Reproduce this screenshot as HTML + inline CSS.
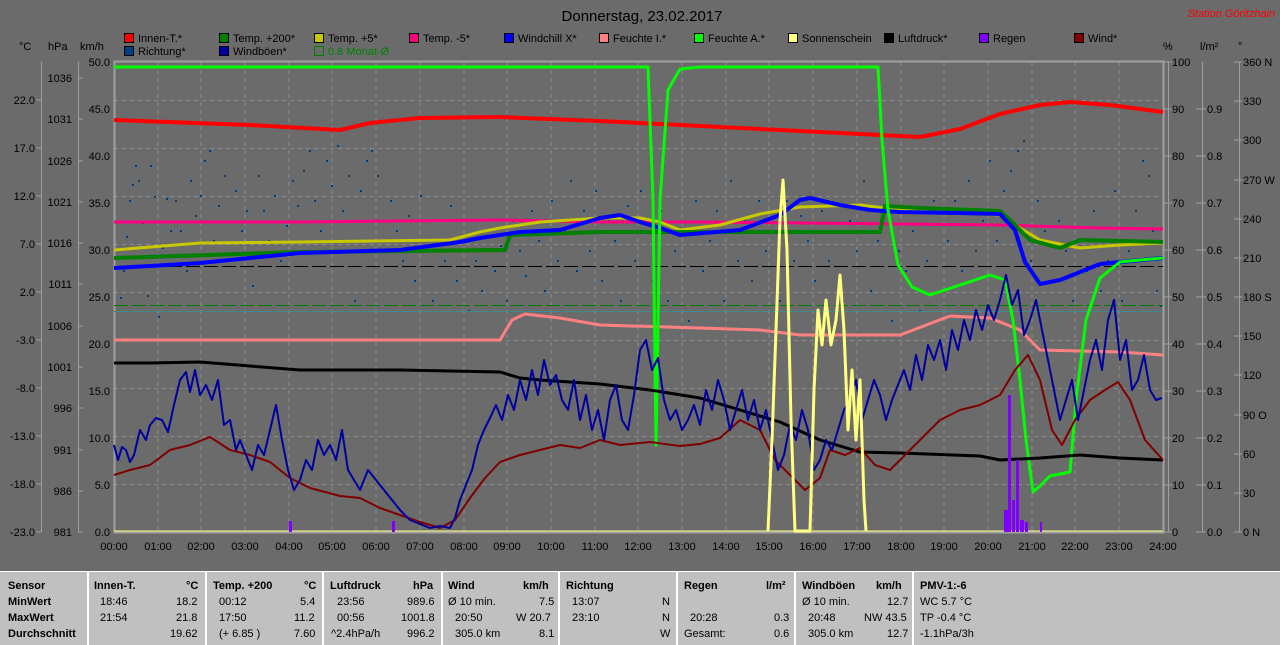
<!DOCTYPE html>
<html><head><meta charset="utf-8"><style>
body{margin:0;width:1280px;height:644px;background:#6b6b6b;overflow:hidden;font-family:"Liberation Sans",sans-serif;}
svg{position:absolute;left:0;top:0}
svg text{font-family:"Liberation Sans",sans-serif;font-size:11px;fill:#000}
#tab{position:absolute;left:0;top:571px;width:1280px;height:73px;background:#c0c0c0;border-top:1px solid #fff;font-size:11px;color:#000}
.c{position:absolute;top:0;height:73px;border-left:2px solid #fff}
.r{position:absolute;white-space:nowrap}
.b{font-weight:bold}
</style></head><body>
<svg width="1280" height="571" viewBox="0 0 1280 571">
<text x="642" y="21" text-anchor="middle" style="font-size:15px">Donnerstag, 23.02.2017</text>
<text x="1275" y="17" text-anchor="end" style="fill:#ff0000;font-size:11px;font-style:italic">Station Göritzhain</text>
<!-- legend -->
<g stroke="#000" stroke-width="1">
<rect x="124.5" y="33.5" width="9" height="9" fill="#ff0000"/>
<rect x="219.5" y="33.5" width="9" height="9" fill="#008000"/>
<rect x="314.5" y="33.5" width="9" height="9" fill="#c8c800"/>
<rect x="409.5" y="33.5" width="9" height="9" fill="#ff0080"/>
<rect x="504.5" y="33.5" width="9" height="9" fill="#0000ff"/>
<rect x="599.5" y="33.5" width="9" height="9" fill="#ff8080"/>
<rect x="694.5" y="33.5" width="9" height="9" fill="#00ff00"/>
<rect x="788.5" y="33.5" width="9" height="9" fill="#ffff80"/>
<rect x="884.5" y="33.5" width="9" height="9" fill="#000000"/>
<rect x="979.5" y="33.5" width="9" height="9" fill="#8000ff"/>
<rect x="1074.5" y="33.5" width="9" height="9" fill="#800000"/>
<rect x="124.5" y="46.5" width="9" height="9" fill="#004080"/>
<rect x="219.5" y="46.5" width="9" height="9" fill="#0000a0"/>
<rect x="314.5" y="46.5" width="9" height="9" fill="none" stroke="#008000"/>
</g>
<g>
<text x="138" y="42">Innen-T.*</text><text x="233" y="42">Temp. +200*</text><text x="328" y="42">Temp. +5*</text>
<text x="423" y="42">Temp. -5*</text><text x="518" y="42">Windchill X*</text><text x="613" y="42">Feuchte I.*</text>
<text x="708" y="42">Feuchte A.*</text><text x="802" y="42">Sonnenschein</text><text x="898" y="42">Luftdruck*</text>
<text x="993" y="42">Regen</text><text x="1088" y="42">Wind*</text>
<text x="138" y="55">Richtung*</text><text x="233" y="55">Windböen*</text><text x="328" y="55" style="fill:#008000">0.8 Monat-Ø</text>
</g>
<text x="19" y="50">°C</text><text x="48" y="50">hPa</text><text x="80" y="50">km/h</text>
<text x="1163" y="50">%</text><text x="1200" y="50">l/m²</text><text x="1238" y="50">°</text>
<!-- axes lines -->
<g stroke="#a0a0a0" stroke-width="1">
<line x1="41.5" y1="62" x2="41.5" y2="532"/><line x1="78.5" y1="62" x2="78.5" y2="532"/>
<line x1="1168.5" y1="62" x2="1168.5" y2="532"/><line x1="1202.5" y1="62" x2="1202.5" y2="532"/><line x1="1239.5" y1="62" x2="1239.5" y2="532"/>
</g>
<g stroke="#a0a0a0">
<path d="M36 100h5M36 148h5M36 196h5M36 244h5M36 292h5M36 340h5M36 388h5M36 436h5M36 484h5M36 532h5"/>
<path d="M78 78h5M78 119h5M78 161h5M78 202h5M78 243h5M78 284h5M78 326h5M78 367h5M78 408h5M78 450h5M78 491h5M78 532h5"/>
<path d="M1164 62h8M1164 109h8M1164 156h8M1164 203h8M1164 250h8M1164 297h8M1164 344h8M1164 391h8M1164 438h8M1164 485h8M1164 532h8"/>
<path d="M1196 109h10M1196 156h10M1196 203h10M1196 250h10M1196 297h10M1196 344h10M1196 391h10M1196 438h10M1196 485h10M1196 532h10"/>
<path d="M1234 62h8M1234 101h8M1234 140h8M1234 180h8M1234 219h8M1234 258h8M1234 297h8M1234 336h8M1234 375h8M1234 415h8M1234 454h8M1234 493h8M1234 532h8"/>
</g>
<g text-anchor="end">
<text x="35" y="104">22.0</text><text x="35" y="152">17.0</text><text x="35" y="200">12.0</text><text x="35" y="248">7.0</text><text x="35" y="296">2.0</text><text x="35" y="344">-3.0</text><text x="35" y="392">-8.0</text><text x="35" y="440">-13.0</text><text x="35" y="488">-18.0</text><text x="35" y="536">-23.0</text>
<text x="72" y="82">1036</text><text x="72" y="123">1031</text><text x="72" y="165">1026</text><text x="72" y="206">1021</text><text x="72" y="247">1016</text><text x="72" y="288">1011</text><text x="72" y="330">1006</text><text x="72" y="371">1001</text><text x="72" y="412">996</text><text x="72" y="454">991</text><text x="72" y="495">986</text><text x="72" y="536">981</text>
<text x="110" y="66">50.0</text><text x="110" y="113">45.0</text><text x="110" y="160">40.0</text><text x="110" y="207">35.0</text><text x="110" y="254">30.0</text><text x="110" y="301">25.0</text><text x="110" y="348">20.0</text><text x="110" y="395">15.0</text><text x="110" y="442">10.0</text><text x="110" y="489">5.0</text><text x="110" y="536">0.0</text>
</g>
<g>
<text x="1172" y="66">100</text><text x="1172" y="113">90</text><text x="1172" y="160">80</text><text x="1172" y="207">70</text><text x="1172" y="254">60</text><text x="1172" y="301">50</text><text x="1172" y="348">40</text><text x="1172" y="395">30</text><text x="1172" y="442">20</text><text x="1172" y="489">10</text><text x="1172" y="536">0</text>
<text x="1207" y="113">0.9</text><text x="1207" y="160">0.8</text><text x="1207" y="207">0.7</text><text x="1207" y="254">0.6</text><text x="1207" y="301">0.5</text><text x="1207" y="348">0.4</text><text x="1207" y="395">0.3</text><text x="1207" y="442">0.2</text><text x="1207" y="489">0.1</text><text x="1207" y="536">0.0</text>
<text x="1243" y="66">360 N</text><text x="1243" y="105">330</text><text x="1243" y="144">300</text><text x="1243" y="184">270 W</text><text x="1243" y="223">240</text><text x="1243" y="262">210</text><text x="1243" y="301">180 S</text><text x="1243" y="340">150</text><text x="1243" y="379">120</text><text x="1243" y="419">90 O</text><text x="1243" y="458">60</text><text x="1243" y="497">30</text><text x="1243" y="536">0 N</text>
</g>
<!-- grid -->
<g stroke="#8c8c8c" stroke-dasharray="4,4" stroke-width="1">
<path d="M114 100.5H1164M114 148.5H1164M114 196.5H1164M114 244.5H1164M114 292.5H1164M114 340.5H1164M114 388.5H1164M114 436.5H1164M114 484.5H1164"/>
<path d="M158 62V532M201 62V532M245 62V532M289 62V532M332 62V532M376 62V532M420 62V532M464 62V532M507 62V532M551 62V532M595 62V532M638 62V532M682 62V532M726 62V532M769 62V532M813 62V532M857 62V532M901 62V532M944 62V532M988 62V532M1032 62V532M1075 62V532M1119 62V532"/>
</g>
<rect x="114.5" y="61.5" width="1049" height="471" fill="none" stroke="#a0a0a0" stroke-width="2"/>
<g text-anchor="middle">
<text x="114" y="550">00:00</text><text x="158" y="550">01:00</text><text x="201" y="550">02:00</text><text x="245" y="550">03:00</text><text x="289" y="550">04:00</text><text x="332" y="550">05:00</text><text x="376" y="550">06:00</text><text x="420" y="550">07:00</text><text x="464" y="550">08:00</text><text x="507" y="550">09:00</text><text x="551" y="550">10:00</text><text x="595" y="550">11:00</text><text x="638" y="550">12:00</text><text x="682" y="550">13:00</text><text x="726" y="550">14:00</text><text x="769" y="550">15:00</text><text x="813" y="550">16:00</text><text x="857" y="550">17:00</text><text x="901" y="550">18:00</text><text x="944" y="550">19:00</text><text x="988" y="550">20:00</text><text x="1032" y="550">21:00</text><text x="1075" y="550">22:00</text><text x="1119" y="550">23:00</text><text x="1163" y="550">24:00</text>
</g>
<!-- scatter Richtung -->
<g fill="#004080">
<path d="M120 297h2v2h-2zM123 270h2v2h-2zM126 236h2v2h-2zM129 200h2v2h-2zM132 184h2v2h-2zM135 165h2v2h-2zM138 180h2v2h-2zM142 222h2v2h-2zM147 295h2v2h-2zM150 165h2v2h-2zM154 196h2v2h-2zM158 316h2v2h-2zM162 247h2v2h-2zM166 198h2v2h-2zM170 230h2v2h-2zM175 200h2v2h-2zM180 230h2v2h-2zM186 270h2v2h-2zM190 180h2v2h-2zM195 215h2v2h-2zM200 195h2v2h-2zM204 160h2v2h-2zM209 150h2v2h-2zM213 240h2v2h-2zM218 205h2v2h-2zM224 175h2v2h-2zM229 260h2v2h-2zM235 190h2v2h-2zM241 230h2v2h-2zM246 210h2v2h-2zM252 285h2v2h-2zM258 175h2v2h-2zM263 210h2v2h-2zM268 240h2v2h-2zM274 195h2v2h-2zM280 260h2v2h-2zM286 225h2v2h-2zM292 180h2v2h-2zM297 205h2v2h-2zM303 170h2v2h-2zM309 150h2v2h-2zM314 200h2v2h-2zM320 230h2v2h-2zM326 160h2v2h-2zM331 185h2v2h-2zM337 145h2v2h-2zM342 210h2v2h-2zM348 175h2v2h-2zM354 300h2v2h-2zM360 190h2v2h-2zM366 160h2v2h-2zM371 150h2v2h-2zM377 175h2v2h-2zM383 240h2v2h-2zM390 200h2v2h-2zM396 230h2v2h-2zM402 260h2v2h-2zM408 215h2v2h-2zM414 280h2v2h-2zM420 195h2v2h-2zM426 240h2v2h-2zM432 300h2v2h-2zM438 220h2v2h-2zM444 260h2v2h-2zM450 205h2v2h-2zM456 280h2v2h-2zM462 240h2v2h-2zM468 310h2v2h-2zM475 260h2v2h-2zM481 290h2v2h-2zM487 230h2v2h-2zM494 270h2v2h-2zM500 245h2v2h-2zM506 300h2v2h-2zM512 220h2v2h-2zM519 250h2v2h-2zM525 275h2v2h-2zM531 210h2v2h-2zM538 240h2v2h-2zM544 290h2v2h-2zM551 200h2v2h-2zM557 260h2v2h-2zM564 230h2v2h-2zM570 180h2v2h-2zM576 270h2v2h-2zM583 210h2v2h-2zM589 250h2v2h-2zM595 190h2v2h-2zM601 280h2v2h-2zM608 220h2v2h-2zM614 240h2v2h-2zM620 300h2v2h-2zM627 205h2v2h-2zM634 260h2v2h-2zM640 190h2v2h-2zM646 230h2v2h-2zM652 280h2v2h-2zM660 210h2v2h-2zM667 300h2v2h-2zM674 250h2v2h-2zM681 230h2v2h-2zM688 320h2v2h-2zM695 200h2v2h-2zM702 270h2v2h-2zM709 240h2v2h-2zM716 210h2v2h-2zM723 300h2v2h-2zM730 180h2v2h-2zM737 260h2v2h-2zM744 220h2v2h-2zM751 280h2v2h-2zM758 200h2v2h-2zM765 250h2v2h-2zM772 230h2v2h-2zM779 300h2v2h-2zM786 200h2v2h-2zM793 260h2v2h-2zM800 215h2v2h-2zM807 240h2v2h-2zM814 280h2v2h-2zM821 210h2v2h-2zM828 260h2v2h-2zM835 230h2v2h-2zM842 300h2v2h-2zM849 220h2v2h-2zM856 250h2v2h-2zM863 180h2v2h-2zM870 290h2v2h-2zM877 240h2v2h-2zM884 210h2v2h-2zM891 320h2v2h-2zM898 250h2v2h-2zM905 270h2v2h-2zM912 230h2v2h-2zM919 310h2v2h-2zM926 260h2v2h-2zM933 200h2v2h-2zM940 290h2v2h-2zM947 240h2v2h-2zM954 200h2v2h-2zM961 270h2v2h-2zM968 180h2v2h-2zM975 250h2v2h-2zM982 220h2v2h-2zM989 160h2v2h-2zM996 240h2v2h-2zM1003 190h2v2h-2zM1010 170h2v2h-2zM1017 150h2v2h-2zM1023 140h2v2h-2zM1030 260h2v2h-2zM1037 200h2v2h-2zM1044 230h2v2h-2zM1051 280h2v2h-2zM1058 220h2v2h-2zM1065 250h2v2h-2zM1072 300h2v2h-2zM1079 240h2v2h-2zM1086 270h2v2h-2zM1093 210h2v2h-2zM1100 290h2v2h-2zM1107 260h2v2h-2zM1114 190h2v2h-2zM1121 300h2v2h-2zM1128 250h2v2h-2zM1135 210h2v2h-2zM1142 160h2v2h-2zM1148 175h2v2h-2zM1152 230h2v2h-2zM1156 290h2v2h-2zM1160 305h2v2h-2z"/>
</g>
<!-- reference lines -->
<line x1="114" y1="266.5" x2="1163" y2="266.5" stroke="#000" stroke-dasharray="14,4"/>
<line x1="114" y1="305.5" x2="1163" y2="305.5" stroke="#008000" stroke-dasharray="14,4"/>
<line x1="114" y1="311.5" x2="1163" y2="311.5" stroke="#3c8c8c"/>
<line x1="114" y1="531" x2="1163" y2="531" stroke="#ffff80"/>
<g fill="none" stroke-linejoin="round">
<polyline stroke="#ff0000" stroke-width="4" points="114,120 250,125 340,130 370,123 420,118 500,117 600,121 700,126 800,131 880,135 920,137 960,129 1000,114 1040,105 1070,102 1110,105 1163,112"/>
<polyline stroke="#ff0080" stroke-width="3" points="114,222 300,222 400,221 500,220 600,222 700,222 800,223 900,224 1000,225 1100,228 1163,229"/>
<polyline stroke="#ff8080" stroke-width="3" points="114,340 500,340 512,320 525,314 560,318 600,325 700,328 760,330 800,335 900,335 950,316 990,318 1020,330 1040,350 1120,352 1163,355"/>
<polyline stroke="#c8c800" stroke-width="3" points="114,250 200,243 300,242 450,240 480,232 500,228 540,222 600,218 640,218 660,222 680,230 720,225 760,214 800,207 860,205 900,210 960,212 1000,215 1020,228 1040,240 1080,248 1120,245 1163,243"/>
<polyline stroke="#008000" stroke-width="4" points="114,258 300,252 505,250 510,235 600,232 880,232 885,206 920,208 1000,211 1010,220 1030,240 1060,248 1080,240 1163,242"/>
<polyline stroke="#0000ff" stroke-width="4" points="114,268 150,266 200,263 250,258 300,253 400,250 460,242 480,238 520,232 560,230 600,218 620,215 640,222 660,228 680,235 740,230 780,215 800,200 810,198 840,205 870,210 900,212 960,213 1000,214 1015,230 1025,262 1040,284 1060,280 1100,264 1163,258"/>
<polyline stroke="#00ff00" stroke-width="3" points="114,67 648,67 653,200 656,445 660,200 668,90 680,69 700,67 878,67 882,140 888,210 898,265 912,287 930,295 960,285 990,275 1005,280 1013,320 1020,380 1026,440 1033,492 1040,486 1050,476 1070,472 1076,400 1086,320 1100,278 1120,262 1140,260 1163,258"/>
<polyline stroke="#000" stroke-width="3" points="114,363 150,363 200,362 250,366 300,370 400,370 500,372 520,378 540,380 600,384 650,390 700,398 740,410 780,422 820,440 860,452 900,453 980,456 1000,460 1040,458 1080,455 1120,458 1163,460"/>
<polyline stroke="#800000" stroke-width="2" points="114,475 130,470 150,465 170,450 190,445 210,437 230,450 250,455 270,462 290,478 310,488 340,496 360,498 380,508 400,515 420,522 440,528 455,520 470,498 485,478 500,462 520,455 540,450 560,445 580,448 600,440 620,445 650,442 680,446 700,444 720,438 740,420 760,430 775,460 790,475 805,490 820,478 830,450 845,455 860,448 875,465 890,470 905,455 920,440 940,420 960,410 980,405 1000,395 1015,370 1028,355 1040,380 1052,430 1062,445 1075,420 1090,400 1105,390 1118,382 1130,400 1145,440 1163,460"/>
<polyline stroke="#0000a0" stroke-width="2" points="114,445 118,460 122,447 126,450 130,462 134,455 140,430 146,440 150,425 156,418 162,420 168,432 174,405 180,380 186,372 190,392 195,370 200,395 206,385 212,400 218,380 224,425 230,420 236,450 240,440 246,455 252,470 258,445 264,455 270,430 276,405 282,440 288,470 294,490 300,480 306,460 312,470 318,440 324,455 330,445 336,460 342,430 348,470 354,480 360,490 368,470 376,480 384,490 392,500 400,510 410,520 420,524 430,528 440,526 450,528 455,518 460,500 466,485 472,470 478,445 484,430 490,418 496,405 502,420 508,395 514,410 520,380 526,400 532,370 538,395 544,360 550,385 556,375 562,400 568,410 574,380 580,420 586,395 592,430 598,410 604,440 610,400 616,385 622,420 628,430 634,395 640,350 646,340 652,370 658,358 664,400 670,420 676,410 682,430 688,420 694,405 700,425 706,390 712,410 718,380 724,400 730,430 736,410 742,390 748,420 754,400 760,430 766,410 772,440 778,470 784,455 790,425 796,440 802,410 808,430 814,470 820,460 826,440 832,450 838,430 844,410 850,400 856,380 862,420 868,400 874,380 880,395 886,420 892,400 898,385 904,370 910,390 916,355 922,380 928,345 934,360 940,340 946,370 952,330 958,350 964,320 970,340 976,310 982,330 988,305 994,320 1000,300 1006,275 1012,305 1018,290 1024,335 1030,320 1036,300 1042,330 1048,360 1054,390 1060,420 1066,400 1072,380 1078,420 1084,390 1090,360 1096,340 1102,370 1108,320 1114,300 1120,360 1126,340 1132,390 1138,380 1144,355 1150,390 1156,400 1162,398"/>
<polyline stroke="#ffff80" stroke-width="3" points="768,531 772,440 776,330 780,220 783,180 787,250 791,420 795,531 810,531 814,390 818,310 822,345 826,300 831,345 836,320 840,275 844,330 848,430 852,370 856,440 860,380 864,500 866,531"/>
</g>
<g fill="#8000ff">
<rect x="289" y="521" width="3" height="11"/><rect x="392" y="521" width="3" height="11"/>
<rect x="1004" y="510" width="4" height="22"/><rect x="1008" y="395" width="3" height="137"/><rect x="1012" y="500" width="3" height="32"/>
<rect x="1016" y="460" width="3" height="72"/><rect x="1020" y="520" width="4" height="12"/><rect x="1025" y="522" width="3" height="10"/><rect x="1040" y="522" width="2" height="10"/>
</g>
</svg>
<div id="tab">
<div class="c" style="left:87px"></div><div class="c" style="left:205px"></div><div class="c" style="left:322px"></div><div class="c" style="left:441px"></div><div class="c" style="left:558px"></div><div class="c" style="left:676px"></div><div class="c" style="left:794px"></div><div class="c" style="left:912px"></div>
<div class="r b" style="left:8px;top:8px">Sensor</div><div class="r b" style="left:8px;top:24px">MinWert</div><div class="r b" style="left:8px;top:40px">MaxWert</div><div class="r b" style="left:8px;top:56px">Durchschnitt</div>
<div class="r b" style="left:94px;top:8px">Innen-T.</div><div class="r b" style="left:186px;top:8px">°C</div>
<div class="r" style="left:100px;top:24px">18:46</div><div class="r" style="left:176px;top:24px">18.2</div>
<div class="r" style="left:100px;top:40px">21:54</div><div class="r" style="left:176px;top:40px">21.8</div>
<div class="r" style="left:170px;top:56px">19.62</div>
<div class="r b" style="left:213px;top:8px">Temp. +200</div><div class="r b" style="left:304px;top:8px">°C</div>
<div class="r" style="left:219px;top:24px">00:12</div><div class="r" style="left:300px;top:24px">5.4</div>
<div class="r" style="left:219px;top:40px">17:50</div><div class="r" style="left:294px;top:40px">11.2</div>
<div class="r" style="left:219px;top:56px">(+ 6.85 )</div><div class="r" style="left:294px;top:56px">7.60</div>
<div class="r b" style="left:330px;top:8px">Luftdruck</div><div class="r b" style="left:413px;top:8px">hPa</div>
<div class="r" style="left:337px;top:24px">23:56</div><div class="r" style="left:407px;top:24px">989.6</div>
<div class="r" style="left:337px;top:40px">00:56</div><div class="r" style="left:401px;top:40px">1001.8</div>
<div class="r" style="left:331px;top:56px">^2.4hPa/h</div><div class="r" style="left:407px;top:56px">996.2</div>
<div class="r b" style="left:448px;top:8px">Wind</div><div class="r b" style="left:523px;top:8px">km/h</div>
<div class="r" style="left:448px;top:24px">Ø 10 min.</div><div class="r" style="left:539px;top:24px">7.5</div>
<div class="r" style="left:455px;top:40px">20:50</div><div class="r" style="left:516px;top:40px">W 20.7</div>
<div class="r" style="left:455px;top:56px">305.0 km</div><div class="r" style="left:539px;top:56px">8.1</div>
<div class="r b" style="left:566px;top:8px">Richtung</div>
<div class="r" style="left:572px;top:24px">13:07</div><div class="r" style="left:662px;top:24px">N</div>
<div class="r" style="left:572px;top:40px">23:10</div><div class="r" style="left:662px;top:40px">N</div>
<div class="r" style="left:660px;top:56px">W</div>
<div class="r b" style="left:684px;top:8px">Regen</div><div class="r b" style="left:766px;top:8px">l/m²</div>
<div class="r" style="left:690px;top:40px">20:28</div><div class="r" style="left:774px;top:40px">0.3</div>
<div class="r" style="left:684px;top:56px">Gesamt:</div><div class="r" style="left:774px;top:56px">0.6</div>
<div class="r b" style="left:802px;top:8px">Windböen</div><div class="r b" style="left:876px;top:8px">km/h</div>
<div class="r" style="left:802px;top:24px">Ø 10 min.</div><div class="r" style="left:887px;top:24px">12.7</div>
<div class="r" style="left:808px;top:40px">20:48</div><div class="r" style="left:864px;top:40px">NW 43.5</div>
<div class="r" style="left:808px;top:56px">305.0 km</div><div class="r" style="left:887px;top:56px">12.7</div>
<div class="r b" style="left:920px;top:8px">PMV-1:-6</div>
<div class="r" style="left:920px;top:24px">WC 5.7 °C</div>
<div class="r" style="left:920px;top:40px">TP -0.4 °C</div>
<div class="r" style="left:920px;top:56px">-1.1hPa/3h</div>
</div>
</body></html>
